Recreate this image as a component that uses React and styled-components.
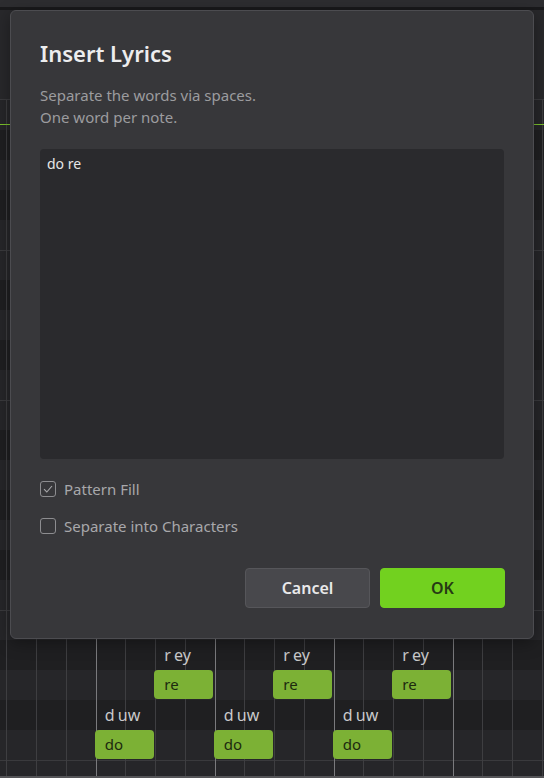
import React from 'react';
import styled, { createGlobalStyle } from 'styled-components';

const ROW_H = 30;
const CELL_W = 29.75;
const GRID_X = 6.5;

// true = black key row, starting at y=100 (B row)
const rowPattern = [false, true, false, true, false, false, true, false, true, false, false, true, false, true, false, true, false, false, true, false, true, false, false];
const octaveTops = [5, 10, 17, 22];

const notes = [
  { lyric: 'do', phoneme: 'd uw', cell: 3, row: 21 },
  { lyric: 're', phoneme: 'r ey', cell: 5, row: 19 },
  { lyric: 'do', phoneme: 'd uw', cell: 7, row: 21 },
  { lyric: 're', phoneme: 'r ey', cell: 9, row: 19 },
  { lyric: 'do', phoneme: 'd uw', cell: 11, row: 21 },
  { lyric: 're', phoneme: 'r ey', cell: 13, row: 19 },
];

const GlobalStyle = createGlobalStyle`
  html, body {
    margin: 0;
    padding: 0;
    background: #1f1f21;
  }
  body {
    font-family: "Noto Sans", "Liberation Sans", sans-serif;
    -webkit-font-smoothing: antialiased;
  }
`;

const Page = styled.div`
  position: relative;
  width: 544px;
  height: 778px;
  overflow: hidden;
  display: flex;
  flex-direction: column;
  background: #262629;
`;

const TopBar = styled.div`
  flex: 0 0 auto;
  height: 7px;
  background: #2d2d30;
  border-bottom: 3px solid #19191b;
`;

const Ruler = styled.div`
  flex: 0 0 auto;
  height: 89px;
  background: #28282b;
  border-bottom: 1px solid #3a3a3d;
`;

const Roll = styled.div`
  position: relative;
  flex: 0 0 676px;
  overflow: hidden;
  display: flex;
  flex-direction: column;
  border-bottom: 2px solid #555558;
`;

const Lines = styled.div`
  position: absolute;
  inset: 0;
  pointer-events: none;
  background-image:
    repeating-linear-gradient(
      to right,
      transparent 0,
      transparent ${GRID_X + 89.25}px,
      #7a7a7d ${GRID_X + 89.25}px,
      #7a7a7d ${GRID_X + 90.25}px,
      transparent ${GRID_X + 90.25}px,
      transparent 119px
    ),
    repeating-linear-gradient(
      to right,
      transparent 0,
      transparent ${GRID_X}px,
      #3e3e41 ${GRID_X}px,
      #3e3e41 ${GRID_X + 1}px,
      transparent ${GRID_X + 1}px,
      transparent ${CELL_W}px
    );
`;

const KeyRow = styled.div`
  flex: 0 0 ${ROW_H}px;
  box-sizing: border-box;
  background: ${p => (p.$black ? '#1f1f21' : '#262629')};
  border-top: ${p => (p.$octave ? '1px solid #3a3a3d' : 'none')};
`;

const Playhead = styled.div`
  position: absolute;
  left: 0;
  right: 0;
  top: 24px;
  height: 1px;
  background: #7cc22c;
`;

const Note = styled.div`
  position: absolute;
  height: 29px;
  width: 59px;
  box-sizing: border-box;
  padding-left: 10px;
  border-radius: 4px;
  background: #7cb135;
  color: #1d2a0f;
  font-size: 15px;
  line-height: 29px;
`;

const Phoneme = styled.div`
  position: absolute;
  color: #c9c9cb;
  font-size: 16px;
  line-height: 20px;
  padding-left: 10px;
  word-spacing: -1px;
`;

const Dialog = styled.div`
  position: absolute;
  left: 10px;
  top: 10px;
  width: 524px;
  box-sizing: border-box;
  padding: 27px 29px 30px;
  display: flex;
  flex-direction: column;
  background: #37373a;
  border: 1px solid #4c4c50;
  border-radius: 6px;
  box-shadow: 0 4px 16px rgba(0, 0, 0, 0.35);
`;

const Title = styled.h2`
  margin: 0;
  font-size: 22px;
  line-height: 30px;
  font-weight: 600;
  color: #ededee;
`;

const Hint = styled.p`
  margin: 16px 0 0;
  font-size: 15px;
  line-height: 22px;
  color: #9c9c9f;
`;

const LyricsInput = styled.textarea`
  margin-top: 21px;
  height: 310px;
  box-sizing: border-box;
  padding: 5px 7px;
  resize: none;
  border: none;
  outline: none;
  border-radius: 4px;
  background: #2a2a2d;
  color: #e6e6e7;
  font-family: inherit;
  font-size: 14px;
  line-height: 20px;
`;

const Options = styled.div`
  margin-top: 22px;
  display: flex;
  flex-direction: column;
  gap: 21px;
`;

const Option = styled.label`
  display: flex;
  align-items: center;
  gap: 8px;
  height: 16px;
  font-size: 15px;
  color: #a8a8ab;
`;

const Box = styled.span`
  width: 16px;
  height: 16px;
  box-sizing: border-box;
  border: 1px solid #8d8d90;
  border-radius: 3px;
  display: flex;
  align-items: center;
  justify-content: center;
`;

const Actions = styled.div`
  margin-top: 34px;
  display: flex;
  justify-content: flex-end;
  gap: 10px;
  margin-right: -1px;
`;

const Button = styled.button`
  width: 125px;
  height: 40px;
  box-sizing: border-box;
  border-radius: 4px;
  font-family: inherit;
  font-size: 16px;
  font-weight: 600;
  cursor: pointer;
  border: 1px solid ${p => (p.$primary ? '#72d11f' : '#56565a')};
  background: ${p => (p.$primary ? '#72d11f' : '#48484c')};
  color: ${p => (p.$primary ? '#263a14' : '#e9e9ea')};
`;

const Checkbox = ({ checked, children }) => (
  <Option>
    <Box>
      {checked && (
        <svg width="10" height="8" viewBox="0 0 10 8">
          <path d="M1 4.2 L3.8 7 L9 1" fill="none" stroke="#a8a8ab" strokeWidth="1.1" />
        </svg>
      )}
    </Box>
    {children}
  </Option>
);

export default function App() {
  return (
    <>
      <GlobalStyle />
      <Page>
        <TopBar />
        <Ruler />
        <Roll>
          {rowPattern.map((black, i) => (
            <KeyRow key={i} $black={black} $octave={octaveTops.includes(i)} />
          ))}
          <Lines />
          <Playhead />
          {notes.map((n, i) => {
            const left = GRID_X + n.cell * CELL_W - 1;
            const top = n.row * ROW_H;
            return (
              <React.Fragment key={i}>
                <Phoneme style={{ left, top: top - 25 }}>{n.phoneme}</Phoneme>
                <Note style={{ left, top }}>{n.lyric}</Note>
              </React.Fragment>
            );
          })}
        </Roll>
        <Dialog>
          <Title>Insert Lyrics</Title>
          <Hint>
            Separate the words via spaces.
            <br />
            One word per note.
          </Hint>
          <LyricsInput defaultValue="do re" spellCheck={false} />
          <Options>
            <Checkbox checked>Pattern Fill</Checkbox>
            <Checkbox>Separate into Characters</Checkbox>
          </Options>
          <Actions>
            <Button>Cancel</Button>
            <Button $primary>OK</Button>
          </Actions>
        </Dialog>
      </Page>
    </>
  );
}
